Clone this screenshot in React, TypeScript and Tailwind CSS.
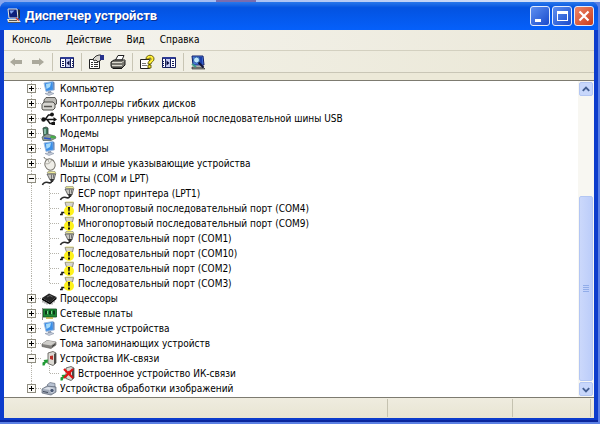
import { useState, type ReactNode } from 'react'

type IconName =
  | 'monitor' | 'floppy' | 'usb' | 'modem' | 'mouse' | 'port' | 'portWarn'
  | 'cpu' | 'network' | 'volume' | 'infrared' | 'infraredOff' | 'imaging'

interface Device {
  label: string
  icon: IconName
  children?: Device[]
}

const devices: Device[] = [
  { label: 'Компьютер', icon: 'monitor' },
  { label: 'Контроллеры гибких дисков', icon: 'floppy' },
  { label: 'Контроллеры универсальной последовательной шины USB', icon: 'usb' },
  { label: 'Модемы', icon: 'modem' },
  { label: 'Мониторы', icon: 'monitor' },
  { label: 'Мыши и иные указывающие устройства', icon: 'mouse' },
  {
    label: 'Порты (COM и LPT)',
    icon: 'port',
    children: [
      { label: 'ECP порт принтера (LPT1)', icon: 'port' },
      { label: 'Многопортовый последовательный порт (COM4)', icon: 'portWarn' },
      { label: 'Многопортовый последовательный порт (COM9)', icon: 'portWarn' },
      { label: 'Последовательный порт (COM1)', icon: 'port' },
      { label: 'Последовательный порт (COM10)', icon: 'portWarn' },
      { label: 'Последовательный порт (COM2)', icon: 'portWarn' },
      { label: 'Последовательный порт (COM3)', icon: 'portWarn' },
    ],
  },
  { label: 'Процессоры', icon: 'cpu' },
  { label: 'Сетевые платы', icon: 'network' },
  { label: 'Системные устройства', icon: 'monitor' },
  { label: 'Тома запоминающих устройств', icon: 'volume' },
  {
    label: 'Устройства ИК-связи',
    icon: 'infrared',
    children: [{ label: 'Встроенное устройство ИК-связи', icon: 'infraredOff' }],
  },
  { label: 'Устройства обработки изображений', icon: 'imaging' },
]

export default function App() {
  return (
    <div className="min-h-screen bg-[#5b80e4] font-['DejaVu_Sans_Condensed','Tahoma','DejaVu_Sans',sans-serif] text-[10px] text-black">
      {/* desktop showing above the window */}
      <div className="flex h-[2px] bg-linear-to-r from-[#86a6ee] to-[#dde6f8]">
        <span className="ml-[36%] w-[40px] bg-[#7a6cae]" />
      </div>
      <div className="bg-linear-to-r from-[#86a6ee] from-50% to-[#5b80e4] pr-[2px]">
        <div className="flex flex-col overflow-hidden rounded-t-[7px] border-b-2 border-[#0a259c] bg-[#0c3ccc]">
          <TitleBar />
          <div className="mx-[4px] mb-[2px] flex flex-col bg-[#ece9d8]">
            <MenuBar />
            <Toolbar />
            <main className="flex border-y border-[#7d7b70] bg-white">
              <DeviceTree />
              <ScrollBar />
            </main>
            <StatusBar />
          </div>
        </div>
      </div>
    </div>
  )
}

function TitleBar() {
  return (
    <header className="flex h-[28px] items-center bg-linear-to-b from-[#2a78ea] via-[#0453e0] via-20% to-[#0560fb] pr-[4px] pl-[6px]">
      <svg width="16" height="16" viewBox="0 0 16 16" aria-hidden="true">
        <path d="M2 1h9l1 9H3z" fill="#0d1f7a" stroke="#e8e6dc" />
        <path d="M3.500 2.500h5L5 6z" fill="#7fa2ee" />
        <path d="M12 1l2 1v8l-1.500 1z" fill="#2a2a2a" />
        <path d="M1 11h11l3 3H2z" fill="#e4e1d3" />
        <path d="M2 14.500h12M3 12.500h8" stroke="#555" fill="none" />
        <path d="M10 10l3 2.500" stroke="#d43b2a" strokeWidth="1.500" />
      </svg>
      <h1 className="flex-1 pl-[3px] font-['Roboto','Noto_Sans',sans-serif] text-[13px] font-bold text-white [text-shadow:1px_1px_#0a2f8f]">
        Диспетчер устройств
      </h1>
      <div className="flex gap-[2px]">
        <CaptionButton label="Свернуть" look="bg-linear-to-br from-[#5f8ff0] to-[#1a49cc]">
          <path d="M4 12h6v3H4z" fill="#fff" />
        </CaptionButton>
        <CaptionButton label="Развернуть" look="bg-linear-to-br from-[#5f8ff0] to-[#1a49cc]">
          <path d="M4 4h11v10H4zM5 7v6h9V7z" fill="#fff" fillRule="evenodd" />
        </CaptionButton>
        <CaptionButton label="Закрыть" look="bg-linear-to-br from-[#ee8465] to-[#c93a18]">
          <path d="M4.500 4.500l9 9M13.500 4.500l-9 9" stroke="#fff" strokeWidth="2.200" />
        </CaptionButton>
      </div>
    </header>
  )
}

function CaptionButton({ label, look, children }: { label: string; look: string; children: ReactNode }) {
  return (
    <button aria-label={label} className={`size-[20px] rounded-[3px] border border-[#e3ebfb] ${look}`}>
      <svg width="18" height="18" viewBox="0 0 18 18">{children}</svg>
    </button>
  )
}

function MenuBar() {
  return (
    <nav className="flex h-[20px] items-center bg-linear-to-r from-[#f6f5f0] to-[#ebe8d9] pl-px">
      {['Консоль', 'Действие', 'Вид', 'Справка'].map(item => (
        <button key={item} className="pr-[8px] pl-[7px] leading-[20px]">{item}</button>
      ))}
    </nav>
  )
}

function Toolbar() {
  return (
    <div className="border-b-[7px] border-[#ece9d8]">
      <div role="toolbar" className="flex h-[23px] items-center border-y border-t-[#d3d0c0] border-b-[#c9c6b6] bg-linear-to-r from-[#f4f3eb] to-[#eae7d6] pl-px">
        <ToolButton label="Назад" disabled>
          <path d="M2 8l5-4v2h7v4H7v2z" fill="#aba99c" />
        </ToolButton>
        <ToolButton label="Вперед" disabled>
          <path d="M14 8L9 4v2H2v4h7v2z" fill="#aba99c" />
        </ToolButton>
        <Divider />
        <ToolButton label="Показать дерево консоли">
          <path d="M1.500 3.500h13v10h-13z" fill="#fff" stroke="#17205c" />
          <path d="M2 3h12v2H2z" fill="#2c3a94" />
          <path d="M3 7.500h2M3 9.500h2M3 11.500h2M13 7.500h1M13 9.500h1M13 11.500h1" stroke="#17205c" />
          <path d="M7 5h4v8H7z" fill="#c5cbf2" />
          <path d="M6.500 5v8M11.500 5v8" stroke="#17205c" />
          <path d="M10.500 6.500v5L7.500 9z" fill="#0a0f40" />
        </ToolButton>
        <Divider />
        <ToolButton label="Свойства">
          <path d="M1.500 5.500h10v9h-10z" fill="#fff" stroke="#222" />
          <path d="M3 8.500h2M6 8.500h4M3 10.500h2M6 10.500h4M3 12.500h2M6 12.500h4" stroke="#333" />
          <path d="M5 5l3-3 3-1h2v5l-3 2-2-2-2 1z" fill="#d9d8d2" stroke="#222" strokeWidth=".9" />
          <path d="M12 1h4v5h-4z" fill="#26328c" />
        </ToolButton>
        <ToolButton label="Печать">
          <path d="M5.500 6L8 1.500h6L12 6z" fill="#fff" stroke="#222" />
          <path d="M1 8l3-2h11v5l-3 3H2l-1-2z" fill="#77766f" stroke="#1b1b1b" />
          <path d="M2 8.500h10l2-2M2 11.500h10" stroke="#dcdad0" fill="none" />
          <path d="M3 14.500h9" stroke="#111" />
        </ToolButton>
        <Divider />
        <ToolButton label="Справка">
          <path d="M1.500 5.500h9v9h-9z" fill="#fff" stroke="#222" />
          <path d="M3 9.500h4M3 11.500h5" stroke="#777" />
          <path d="M7 5c0-5 8-5 8 0 0 3-3 2.500-3 5H9c0-4 3-3 3-5 0-1.500-2-1.500-2 0z" fill="#ffee37" stroke="#5a5200" strokeWidth=".9" />
          <path d="M9 11h3v3H9z" fill="#ffee37" stroke="#5a5200" strokeWidth=".9" />
        </ToolButton>
        <ToolButton label="Показать область действий">
          <path d="M1.500 3.500h13v10h-13z" fill="#fff" stroke="#17205c" />
          <path d="M2 3h12v2H2z" fill="#2c3a94" />
          <path d="M5 5h4v8H5z" fill="#c5cbf2" />
          <path d="M4.500 5v8M9.500 5v8" stroke="#17205c" />
          <path d="M5.500 6.500v5l3-2.500z" fill="#0a0f40" />
          <path d="M11 7.500h2M11 9.500h2M11 11.500h2M2 7.500h1M2 9.500h1M2 11.500h1" stroke="#17205c" />
        </ToolButton>
        <Divider />
        <ToolButton label="Обновить конфигурацию оборудования">
          <path d="M2 2h11l1 9H3z" fill="#4d7ee0" stroke="#12206b" />
          <path d="M9 3h3l.500 7H9z" fill="#1c3fa8" />
          <path d="M2 13h11l2 2H2z" fill="#8f8e86" stroke="#222" strokeWidth=".6" />
          <circle cx="6.500" cy="6" r="3" fill="#bfe6fb" stroke="#2d62a8" />
          <path d="M8.500 8.500l5 5" stroke="#10143a" strokeWidth="2" />
          <path d="M2 10l4 3" stroke="#3b9e8b" strokeWidth="2" />
        </ToolButton>
      </div>
    </div>
  )
}

function ToolButton({ label, disabled, children }: { label: string; disabled?: boolean; children: ReactNode }) {
  return (
    <button aria-label={label} disabled={disabled} className="flex w-[22px] justify-center">
      <svg width="16" height="16" viewBox="0 0 16 16">{children}</svg>
    </button>
  )
}

function Divider() {
  return <span className="mx-[3px] h-[18px] w-px bg-[#c8c5b4]" />
}

function DeviceTree() {
  const [closed, setClosed] = useState<string[]>([])
  const toggle = (label: string) =>
    setClosed(c => (c.includes(label) ? c.filter(l => l !== label) : [...c, label]))

  return (
    <ul className="min-w-0 flex-1 pb-px pl-[23px]">
      {devices.map((d, i) => {
        const last = i === devices.length - 1
        const open = !!d.children && !closed.includes(d.label)
        return (
          <li key={d.label}>
            <div className="flex h-[15px] items-center">
              <span className="grid w-[14px] items-center">
                <svg className="col-start-1 row-start-1" width="14" height="15" viewBox="0 0 14 15" aria-hidden="true">
                  <path d={last ? 'M4.500 0v8M5 7.500h9' : 'M4.500 0v15M5 7.500h9'} stroke="#b5b3aa" strokeDasharray="1 1" />
                </svg>
                <button
                  aria-label={open ? 'Свернуть' : 'Развернуть'}
                  onClick={() => toggle(d.label)}
                  className="col-start-1 row-start-1 size-[9px] border border-[#8f8d80] bg-[#fbfaf7]"
                >
                  <svg width="7" height="7" viewBox="0 0 7 7">
                    <path d={open ? 'M1 3.500h5' : 'M1 3.500h5M3.500 1v5'} stroke="#000" />
                  </svg>
                </button>
              </span>
              <DeviceIcon name={d.icon} />
              <span className="pl-[3px] leading-[15px] whitespace-nowrap">{d.label}</span>
            </div>
            {open && (
              <ul>
                {d.children!.map((child, k) => (
                  <li key={child.label} className="flex h-[15px] items-center">
                    <svg width="32" height="15" viewBox="0 0 32 15" aria-hidden="true">
                      <path
                        d={`M4.500 0v15M22.500 0v${k === d.children!.length - 1 ? 8 : 15}M23 7.500h9`}
                        stroke="#b5b3aa"
                        strokeDasharray="1 1"
                      />
                    </svg>
                    <DeviceIcon name={child.icon} />
                    <span className="pl-[3px] leading-[15px] whitespace-nowrap">{child.label}</span>
                  </li>
                ))}
              </ul>
            )}
          </li>
        )
      })}
    </ul>
  )
}

const plug = (
  <>
    <path d="M6 2l1-1.500h7L15 3z" fill="#f2ef9a" stroke="#8a886f" strokeWidth=".6" />
    <path d="M6 3h8.500L13 9H9z" fill="#c9c8c2" stroke="#4a4a4a" strokeWidth=".8" />
    <path d="M10.500 3.500v5M12.500 3.500v4" stroke="#777" />
    <path d="M9 8h4l-1 3h-2z" fill="#333" />
    <path d="M11 10c-1 2.500-3 2-4 1.500S2 11 1.500 14" fill="none" stroke="#2b2b2b" strokeWidth="1.600" />
  </>
)

const irBox = (
  <>
    <path d="M7 2l5-1.500 3 1.500v10l-3 2.500-5-2z" fill="#dcdad4" stroke="#55534e" strokeWidth=".8" />
    <path d="M13 3v10.500L15 12V2z" fill="#4b4945" />
    <path d="M9 5l3-.500V9L9 8z" fill="#b9312a" />
    <path d="M1.500 14.500v-3l2-1-1-1.500 4.500-.500-.500 4-1.500-1-1.500 3z" fill="#1f9a34" />
  </>
)

const icons: Record<IconName, ReactNode> = {
  monitor: (
    <>
      <path d="M3 2l9-1.500L12.500 9 5 10.500z" fill="#3b8fe8" stroke="#9db9dc" strokeWidth=".9" />
      <path d="M5 3l5-1-1 4-3.500 2z" fill="#a8dcfb" />
      <path d="M12 .500l1.500 1V9l-1 .500z" fill="#5b7cb0" />
      <path d="M7 10.500l3-.500.500 2H7z" fill="#8795ab" />
      <path d="M4 12.500l6-1 3 1-5 2z" fill="#c7cedb" stroke="#8894a8" strokeWidth=".6" />
    </>
  ),
  floppy: (
    <>
      <path d="M3 4l2-2.500h9L15.500 4v4L13 9H3z" fill="#bcbbb6" stroke="#4d4c49" strokeWidth=".9" />
      <path d="M1 8.500L3 6h9l2 2v4l-2 2H2l-1-1.500z" fill="#d6d5d0" stroke="#3d3c39" strokeWidth=".9" />
      <path d="M3 10.500h8" stroke="#55544f" strokeWidth="1.500" />
    </>
  ),
  usb: (
    <>
      <path d="M1 8.500h12M4 8.500L7.500 4H11M6 8.500l3 4h3" fill="none" stroke="#161616" strokeWidth="1.400" />
      <circle cx="2.500" cy="8.500" r="2.200" fill="#161616" />
      <path d="M12.500 6l3.500 2.500-3.500 2.500z" fill="#161616" />
      <circle cx="11" cy="3.500" r="1.900" fill="#161616" />
      <path d="M10.500 11h3.500v3h-3.500z" fill="#161616" />
    </>
  ),
  modem: (
    <>
      <path d="M2 2l3-1 2 1v9H3z" fill="#41795d" stroke="#2e4038" strokeWidth=".8" />
      <path d="M3 3h2v5H3z" fill="#88b8a5" />
      <path d="M1 11l5-3 8 2 1 2-5 2.500H2z" fill="#909b95" stroke="#4d5a54" strokeWidth=".7" />
      <path d="M3 12l7 1" stroke="#2c54c4" strokeWidth="1.500" />
      <path d="M10 9.500l5 1-1 2-5-.500z" fill="#48ad4a" />
    </>
  ),
  mouse: (
    <>
      <path d="M3 1c0 2 3 2 4 3" fill="none" stroke="#68675f" />
      <ellipse cx="9" cy="8.500" rx="5" ry="5.800" transform="rotate(-25 9 8.500)" fill="#efeee8" stroke="#77756d" />
      <path d="M4.500 7.500c3 1 5-.500 6-3.500M7 3.500l1 3" fill="none" stroke="#99978e" strokeWidth=".8" />
    </>
  ),
  port: plug,
  portWarn: (
    <>
      <path d="M1 13.500h2v-2h3" fill="none" stroke="#1a1a1a" strokeWidth="1.600" />
      <path d="M6 1.500h8.500L13.500 6h-6z" fill="#d6d5cd" stroke="#77756c" strokeWidth=".8" />
      <path d="M6.500 1h8" stroke="#e3df84" />
      <circle cx="10" cy="10" r="5" fill="#fff21a" />
      <path d="M9 6h2l-.400 4.500H9.400zM9 11.500h2v2H9z" fill="#111" />
    </>
  ),
  cpu: (
    <>
      <path d="M1 7l7-4.500L15.500 6 9 11.500z" fill="#262626" />
      <path d="M1 7v2l8 4.500L15.500 8V6L9 11.500z" fill="#060606" />
      <path d="M2 10v1.500M4 11v1.500M6 12v1.500M11 12v1.500M13 10v1.500" stroke="#6d6d6d" />
      <path d="M6 6l3-1.500L11.500 6" fill="none" stroke="#777" strokeWidth=".8" />
    </>
  ),
  network: (
    <>
      <path d="M2 3h13.500v8H2z" fill="#1e8a36" stroke="#0e4f1e" strokeWidth=".8" />
      <path d="M1.500 2v12" stroke="#8b8b86" />
      <path d="M4 4.500h2v4H4zM8 4.500h2v4H8zM12 4.500h2v4h-2z" fill="#0b3b18" />
      <path d="M6.500 5v3M10.500 5v3" stroke="#7bd48b" />
      <path d="M5 12h7" stroke="#b5a836" strokeWidth="1.500" />
    </>
  ),
  volume: (
    <>
      <path d="M1 8l5-3.500 9 1.500v3l-5 3.500-9-2z" fill="#84837f" stroke="#575651" strokeWidth=".6" />
      <path d="M1 8l5-3.500 9 1.500-5 3.500z" fill="#cfceca" />
      <path d="M11 10.500l3-2" stroke="#333" />
    </>
  ),
  infrared: irBox,
  infraredOff: (
    <>
      {irBox}
      <path d="M5 3l9 9M14 3l-9 9" stroke="#e01414" strokeWidth="2.200" />
    </>
  ),
  imaging: (
    <>
      <path d="M6 4l3-2.500 5 1V6L9 7z" fill="#b8c2d2" stroke="#67707f" strokeWidth=".7" />
      <path d="M1 8l5-3 9 1v5l-5 3-9-2z" fill="#a2abba" stroke="#5b6472" strokeWidth=".7" />
      <path d="M2 8l5-2 7 1-4 2z" fill="#dde2ea" />
      <circle cx="11" cy="9.500" r="2.200" fill="#4b5a76" stroke="#e1e6ef" strokeWidth=".8" />
      <path d="M2 10.500l5 1" stroke="#414a5a" />
    </>
  ),
}

function DeviceIcon({ name }: { name: IconName }) {
  return (
    <svg className="shrink-0" width="16" height="15" viewBox="0 0 16 15" aria-hidden="true">
      {icons[name]}
    </svg>
  )
}

function ScrollBar() {
  return (
    <div className="flex w-[16px] flex-col bg-[#f8f7f2] p-px">
      <ScrollButton label="Вверх" d="M3 8l3.500-3.500L10 8" />
      <div className="flex flex-1 flex-col justify-end py-px">
        <div className="flex h-[65%] items-center justify-center rounded-[2px] border border-[#b3c6f3] bg-linear-to-r from-[#cbd8fb] to-[#bccdfa]">
          <svg width="6" height="8" viewBox="0 0 6 8" aria-hidden="true">
            <path d="M0 .500h6M0 2.500h6M0 4.500h6M0 6.500h6" stroke="#92ade9" />
          </svg>
        </div>
      </div>
      <ScrollButton label="Вниз" d="M3 5l3.500 3.500L10 5" />
    </div>
  )
}

function ScrollButton({ label, d }: { label: string; d: string }) {
  return (
    <button aria-label={label} className="flex h-[14px] items-center justify-center rounded-[2px] border border-[#b3c6f3] bg-[#c8d7fb]">
      <svg width="13" height="13" viewBox="0 0 13 13">
        <path d={d} fill="none" stroke="#435e91" strokeWidth="2" />
      </svg>
    </button>
  )
}

function StatusBar() {
  return (
    <footer className="flex h-[20px] justify-end bg-linear-to-b from-[#efecdf] to-[#e8e5d3] py-px">
      <span className="w-[125px] border-l border-[#c5c2b0]" />
      <span className="w-[79px] border-x border-[#c5c2b0]" />
      <span className="w-[3px]" />
    </footer>
  )
}
